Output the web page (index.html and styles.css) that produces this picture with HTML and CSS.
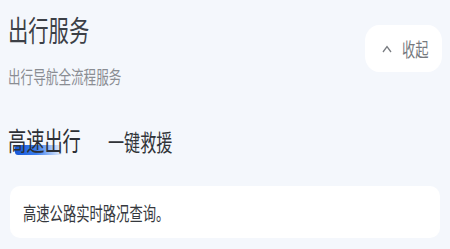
FILE: index.html
```html
<!DOCTYPE html>
<html lang="zh">
<head>
<meta charset="utf-8">
<link rel="stylesheet" href="styles.css">
</head>
<body>
<div class="page">
  <div class="header">
    <div class="head-text">
      <div class="title"><span class="sq">出行服务</span></div>
      <div class="subtitle"><span class="sq">出行导航全流程服务</span></div>
    </div>
    <button class="collapse">
      <svg class="caret" width="10" height="8" viewBox="0 0 10 8"><path d="M1 7 L5 1.5 L9 7" fill="none" stroke="#7a7d82" stroke-width="1.3"/></svg>
      <span class="sq btn-label">收起</span>
    </button>
  </div>
  <div class="tabs">
    <div class="tab active"><span class="bar"></span><span class="sq label">高速出行</span></div>
    <div class="tab"><span class="sq">一键救援</span></div>
  </div>
  <div class="card"><span class="sq">高速公路实时路况查询。</span></div>
</div>
</body>
</html>
```
FILE: styles.css
```css
html, body {
  margin: 0;
  padding: 0;
  background: #f4f7fc;
  font-family: "Noto Sans CJK SC", "Noto Sans", sans-serif;
}
.page {
  padding: 12px 8px 0 8px;
}
.sq {
  display: inline-block;
  white-space: nowrap;
  transform: scaleX(0.7);
  transform-origin: left center;
}
.header {
  display: flex;
  justify-content: space-between;
  align-items: flex-start;
}
.head-text {
  width: 160px;
}
.title {
  font-size: 29px;
  line-height: 34px;
  color: #3c4047;
}
.subtitle {
  margin-top: 19px;
  font-size: 18px;
  line-height: 22px;
  color: #8a8d93;
}
.collapse {
  margin-top: 13px;
  width: 77px;
  height: 47px;
  border: none;
  border-radius: 14px / 16px;
  background: #ffffff;
  display: flex;
  align-items: center;
  justify-content: flex-start;
  gap: 10px;
  font-family: inherit;
  font-size: 19px;
  color: #76797e;
  padding: 0 0 0 17px;
  overflow: hidden;
}
.caret {
  display: block;
  flex: none;
}
.btn-label {
  flex: none;
}
.tabs {
  margin-top: 38px;
  display: flex;
  align-items: flex-end;
  gap: 28px;
}
.tab {
  font-size: 23px;
  line-height: 28px;
  color: #303338;
}
.tab.active {
  position: relative;
  width: 72px;
  font-size: 26px;
  line-height: 30px;
  color: #2c2f35;
}
.tab.active .label {
  position: relative;
}
.bar {
  position: absolute;
  left: 7px;
  top: 20px;
  width: 48px;
  height: 10px;
  border-radius: 3px;
  background: linear-gradient(90deg, #1656d6 0%, #3b7ff0 45%, rgba(120, 170, 250, 0) 100%);
}
.card {
  margin: 31px 2px 0 2px;
  height: 52px;
  background: #ffffff;
  border-radius: 10px;
  display: flex;
  align-items: center;
  padding-left: 13px;
  font-size: 19px;
  color: #35383d;
}
```
